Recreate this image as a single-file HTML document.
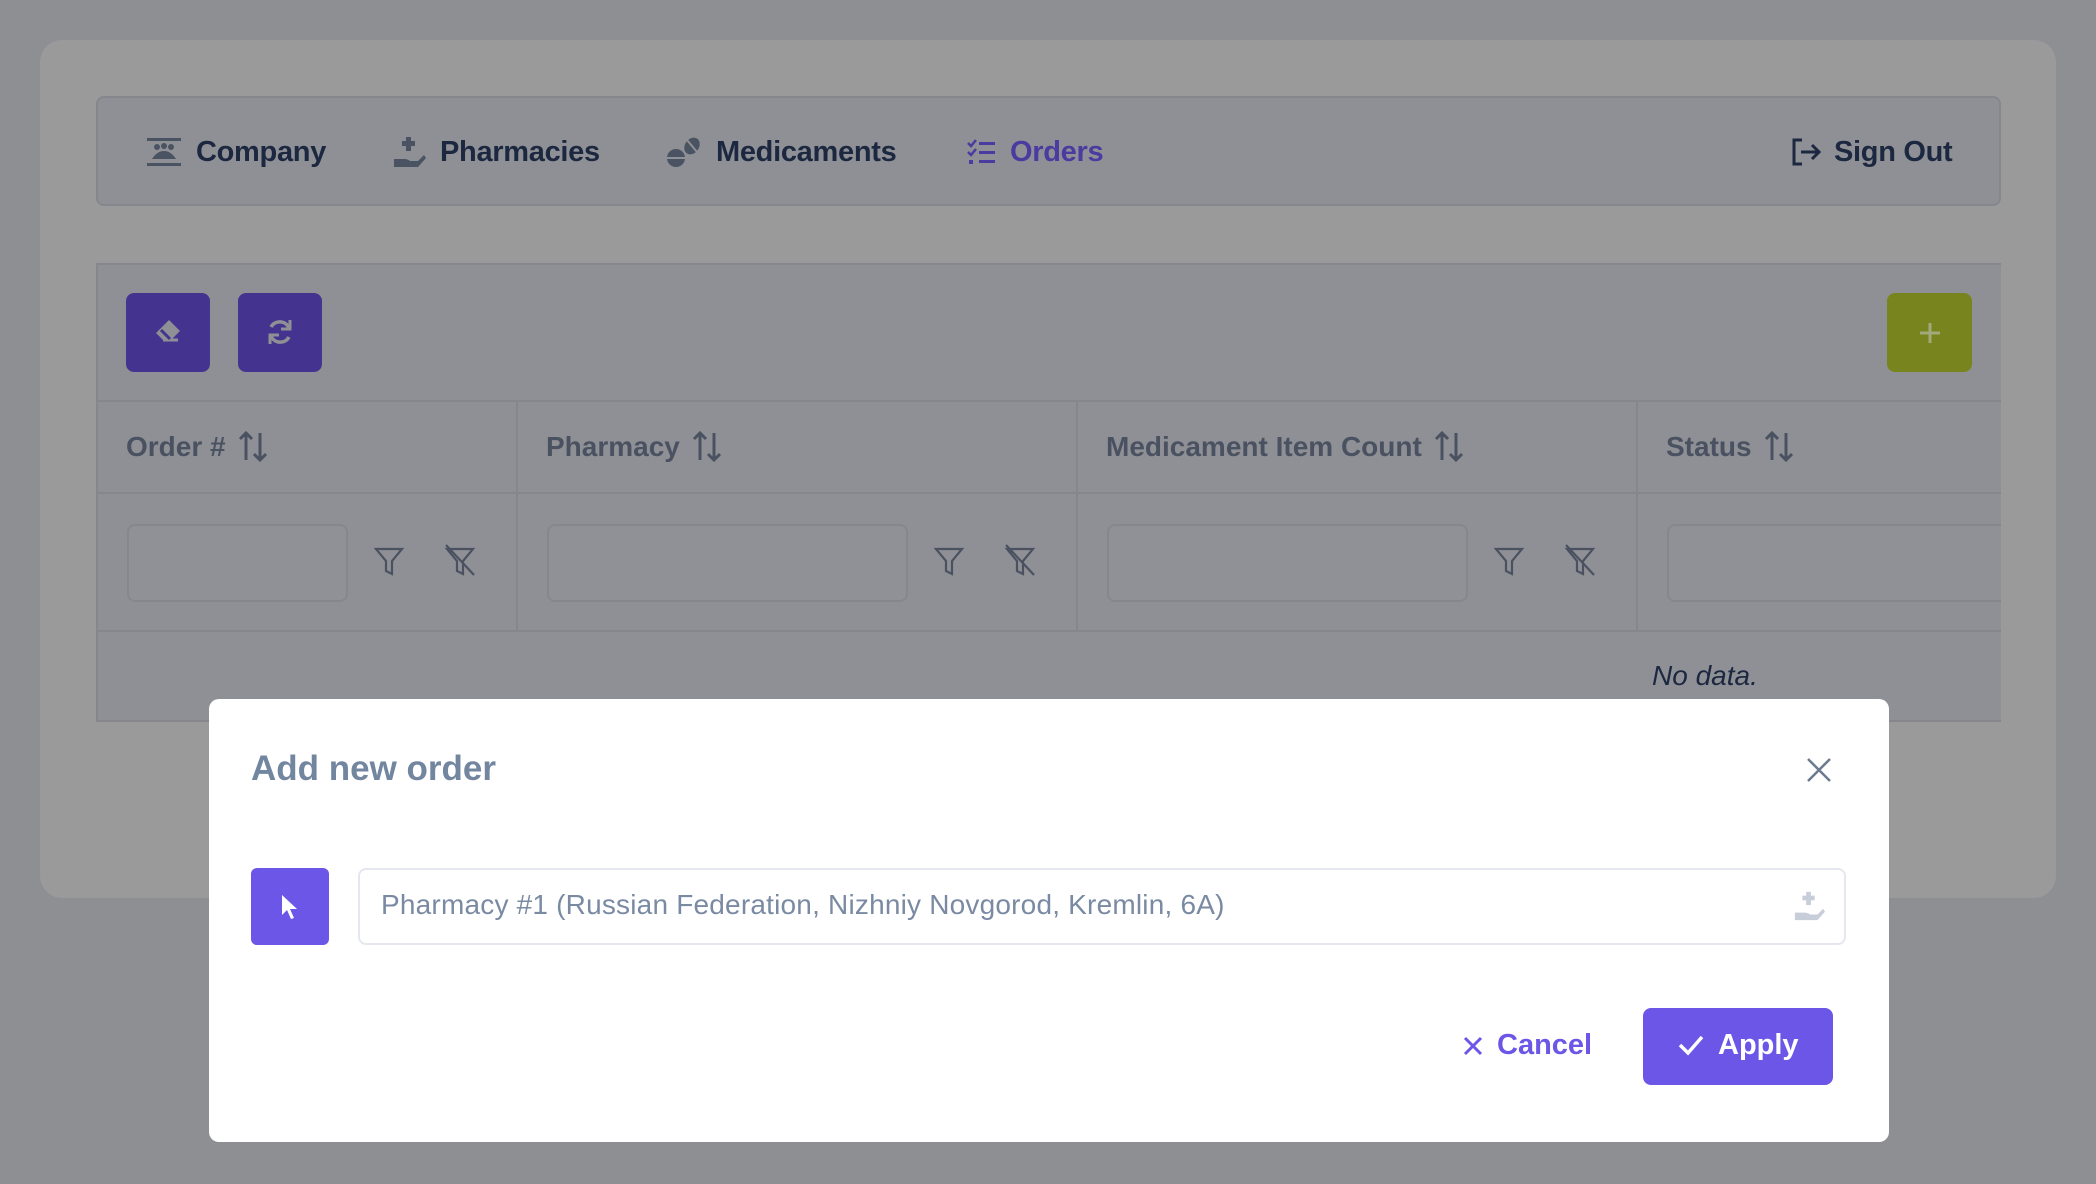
<!DOCTYPE html>
<html><head><meta charset="utf-8"><style>
*{box-sizing:border-box;margin:0;padding:0}
body{width:2096px;height:1184px;background:#8e8f93;font-family:"Liberation Sans",sans-serif;position:relative;overflow:hidden}
.abs{position:absolute}
.card{left:40px;top:40px;width:2016px;height:858px;background:#9a9a9b;border-radius:22px}
.nav{left:96px;top:96px;width:1905px;height:110px;background:#8f9095;border:2px solid #86878c;border-radius:8px}
.ni{position:absolute;top:132px;font-size:29px;font-weight:bold;color:#1c2740;display:flex;align-items:center;gap:12px;height:40px;letter-spacing:-0.3px}
.tbl{left:96px;top:263px;width:1905px;height:459px;background:#8f9095;border:2px solid #86878c;border-right:none;overflow:hidden}
.btn{position:absolute;border-radius:8px;background:#44338f}
.th{position:absolute;top:430px;font-size:28px;font-weight:bold;color:#4a5261;display:flex;align-items:center;gap:12px}
.inp{position:absolute;top:524px;height:78px;border:2px solid #86878c;border-radius:8px;background:#909196}
.line{position:absolute;background:#86878c}
.modal{left:209px;top:699px;width:1680px;height:443px;background:#fff;border-radius:10px}
</style></head><body>
<div class="abs card"></div>
<div class="abs nav"></div>
<div class="ni" style="left:146px"><svg width="36" height="30" viewBox="0 0 36 30"><rect x="1" y="1" width="34" height="3" fill="#4a5362"/><rect x="1" y="26" width="34" height="3" fill="#4a5362"/><circle cx="11" cy="10" r="3" fill="#4a5362"/><circle cx="18" cy="9" r="3" fill="#4a5362"/><circle cx="25" cy="10" r="3" fill="#4a5362"/><path d="M6 22q5-8 12-8t12 8z" fill="#4a5362"/></svg><span style="margin-left:2px">Company</span></div>
<div class="ni" style="left:392px"><svg width="34" height="34" viewBox="0 0 34 34"><rect x="14" y="2" width="5" height="14" fill="#4a5362"/><rect x="10" y="6" width="13" height="5" fill="#4a5362"/><path d="M2 24h10q4 0 6 2h8l6-6 2 3-8 9H2z" fill="#4a5362"/></svg><span style="margin-left:2px">Pharmacies</span></div>
<div class="ni" style="left:666px"><svg width="36" height="32" viewBox="0 0 36 32"><circle cx="10" cy="22" r="9" fill="#4a5362"/><rect x="1" y="21" width="18" height="2" fill="#909196"/><ellipse cx="26" cy="10" rx="7" ry="9" transform="rotate(35 26 10)" fill="#4a5362"/><path d="M21 4l10 12" stroke="#909196" stroke-width="2"/></svg><span style="margin-left:2px">Medicaments</span></div>
<div class="ni" style="left:966px;color:#4b3aa0"><svg width="30" height="28" viewBox="0 0 30 28"><path d="M2 5l3 3 5-6M2 14l3 3 5-6" stroke="#4b3aa0" stroke-width="2.5" fill="none"/><rect x="3" y="22" width="4" height="4" fill="#4b3aa0"/><rect x="13" y="4" width="16" height="3" fill="#4b3aa0"/><rect x="13" y="13" width="16" height="3" fill="#4b3aa0"/><rect x="13" y="22" width="16" height="3" fill="#4b3aa0"/></svg><span style="margin-left:2px">Orders</span></div>
<div class="ni" style="left:1790px"><svg width="32" height="30" viewBox="0 0 32 30"><path d="M12 3H4v24h8" stroke="#1c2740" stroke-width="3" fill="none"/><path d="M11 15h18M22 8l7 7-7 7" stroke="#1c2740" stroke-width="3" fill="none"/></svg><span>Sign Out</span></div>

<div class="abs tbl">
<div class="inp" style="left:1569px;top:259px;width:360px"></div>
</div>
<div class="btn" style="left:126px;top:293px;width:84px;height:79px"><svg style="position:absolute;left:27px;top:24px" width="30" height="30" viewBox="0 0 30 30"><path d="M16 3l11 11-9 9H10l-7-7z" fill="#8f9095"/><path d="M10 23h15" stroke="#8f9095" stroke-width="3"/><path d="M8 13l9 9" stroke="#44338f" stroke-width="3"/></svg></div>
<div class="btn" style="left:238px;top:293px;width:84px;height:79px"><svg style="position:absolute;left:27px;top:24px" width="30" height="30" viewBox="0 0 30 30"><path d="M24 11A10 10 0 0 0 6 10M6 19a10 10 0 0 0 18 1" stroke="#8f9095" stroke-width="3.5" fill="none"/><path d="M25 3v9h-9M5 27v-9h9" stroke="#8f9095" stroke-width="3" fill="none"/></svg></div>
<div class="btn" style="left:1887px;top:293px;width:85px;height:79px;background:#78851f"><svg style="position:absolute;left:31px;top:28px" width="24" height="24"><path d="M12 2v20M2 12h20" stroke="#a2a97a" stroke-width="3"/></svg></div>

<div class="line" style="left:96px;top:400px;width:1905px;height:2px"></div>
<div class="line" style="left:96px;top:492px;width:1905px;height:2px"></div>
<div class="line" style="left:96px;top:630px;width:1905px;height:2px"></div>
<div class="line" style="left:516px;top:400px;width:2px;height:232px"></div>
<div class="line" style="left:1076px;top:400px;width:2px;height:232px"></div>
<div class="line" style="left:1636px;top:400px;width:2px;height:232px"></div>

<svg width="0" height="0" style="position:absolute"><defs><g id="srt"><path d="M8 30V3M2 9l6-6 6 6M22 3v27M16 24l6 6 6-6" stroke="#4a5261" stroke-width="3" fill="none"/></g></defs></svg>
<div class="th" style="left:126px">Order #<svg width="30" height="33"><use href="#srt"/></svg></div>
<div class="th" style="left:546px">Pharmacy<svg width="30" height="33"><use href="#srt"/></svg></div>
<div class="th" style="left:1106px">Medicament Item Count<svg width="30" height="33"><use href="#srt"/></svg></div>
<div class="th" style="left:1666px">Status<svg width="30" height="33"><use href="#srt"/></svg></div>

<div class="inp" style="left:127px;width:221px"></div>
<div class="inp" style="left:547px;width:361px"></div>
<div class="inp" style="left:1107px;width:361px"></div>
<svg class="abs" style="left:0;top:0" width="2096" height="700">
<g stroke="#4a5261" stroke-width="2.2" fill="none">
<path d="M376 549h26l-10 12v13l-6-3v-10z"/><path d="M447 549h26l-10 12v13l-6-3v-10zM446 545l28 30"/>
<path d="M936 549h26l-10 12v13l-6-3v-10z"/><path d="M1007 549h26l-10 12v13l-6-3v-10zM1006 545l28 30"/>
<path d="M1496 549h26l-10 12v13l-6-3v-10z"/><path d="M1567 549h26l-10 12v13l-6-3v-10zM1566 545l28 30"/>
</g></svg>
<div class="abs" style="left:1652px;top:660px;font-size:28px;font-style:italic;color:#1c2740">No data.</div>

<div class="abs modal"></div>
<div class="abs" style="left:251px;top:749px;font-size:35px;font-weight:bold;color:#7386a0">Add new order</div>
<svg class="abs" style="left:1806px;top:757px" width="26" height="26"><path d="M2 2l22 22M24 2L2 24" stroke="#6b7a90" stroke-width="2.5"/></svg>
<div class="abs" style="left:251px;top:868px;width:78px;height:77px;background:#6c56e8;border-radius:6px"><svg style="position:absolute;left:28px;top:25px" width="22" height="28" viewBox="0 0 22 28"><path d="M3 2v20l5-5 4 9 3-1-4-9h7z" fill="#fff"/></svg></div>
<div class="abs" style="left:358px;top:868px;width:1488px;height:77px;border:2px solid #e4e8ee;border-radius:8px"></div>
<div class="abs" style="left:381px;top:889px;font-size:28px;color:#7a8aa3;letter-spacing:0.2px">Pharmacy #1 (Russian Federation, Nizhniy Novgorod, Kremlin, 6A)</div>
<svg class="abs" style="left:1793px;top:890px" width="32" height="32" viewBox="0 0 34 34"><rect x="14" y="2" width="5" height="14" fill="#c8ced9"/><rect x="10" y="6" width="13" height="5" fill="#c8ced9"/><path d="M2 24h10q4 0 6 2h8l6-6 2 3-8 9H2z" fill="#c8ced9"/></svg>
<svg class="abs" style="left:1463px;top:1036px" width="20" height="20"><path d="M2 2l16 16M18 2L2 18" stroke="#6c56e8" stroke-width="3"/></svg>
<div class="abs" style="left:1497px;top:1029px;font-size:29px;font-weight:bold;color:#6c56e8">Cancel</div>
<div class="abs" style="left:1643px;top:1008px;width:190px;height:77px;background:#6c56e8;border-radius:8px"></div>
<svg class="abs" style="left:1678px;top:1034px" width="26" height="22"><path d="M2 11l8 8L24 3" stroke="#fff" stroke-width="3.5" fill="none"/></svg>
<div class="abs" style="left:1718px;top:1029px;font-size:29px;font-weight:bold;color:#fff">Apply</div>
</body></html>
